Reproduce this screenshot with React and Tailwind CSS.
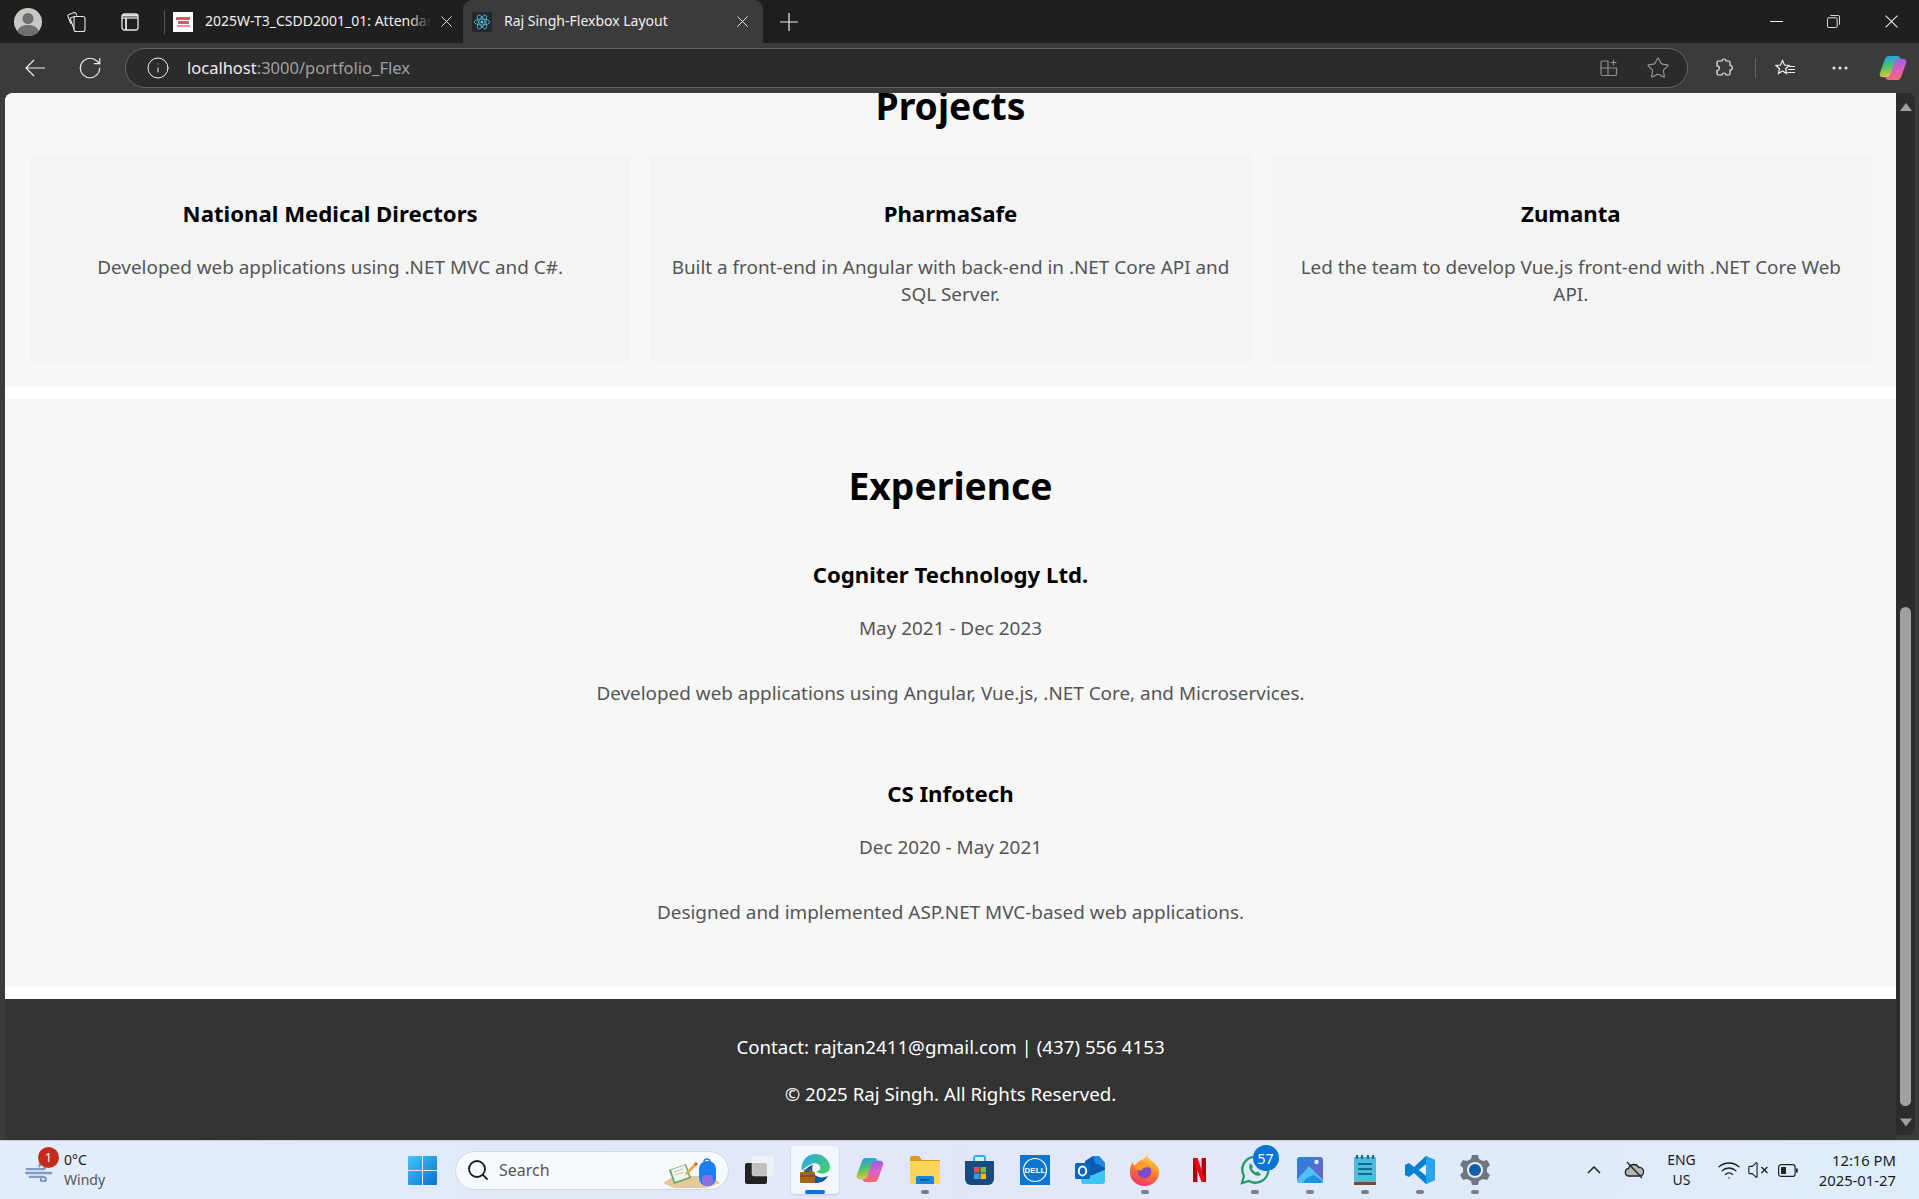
import { RotateCw, Info, Star, Wifi, VolumeX, Search } from "lucide-react";

const projects = [
  { title: "National Medical Directors", text: "Developed web applications using .NET MVC and C#." },
  { title: "PharmaSafe", text: "Built a front-end in Angular with back-end in .NET Core API and SQL Server." },
  { title: "Zumanta", text: "Led the team to develop Vue.js front-end with .NET Core Web API." },
];

const jobs = [
  { company: "Cogniter Technology Ltd.", dates: "May 2021 - Dec 2023", text: "Developed web applications using Angular, Vue.js, .NET Core, and Microservices." },
  { company: "CS Infotech", dates: "Dec 2020 - May 2021", text: "Designed and implemented ASP.NET MVC-based web applications." },
];

function Cross({ className }) {
  return (
    <svg viewBox="0 0 12 12" className={className} fill="none" stroke="currentColor" strokeWidth="1">
      <path d="M.5.5l11 11M11.5.5l-11 11" />
    </svg>
  );
}

function ReactLogo() {
  return (
    <svg viewBox="0 0 20 20" className="w-[18px] h-[18px]" fill="none" stroke="#58c4dc" strokeWidth="0.9">
      <ellipse cx="10" cy="10" rx="8.500" ry="3.400" />
      <ellipse cx="10" cy="10" rx="8.500" ry="3.400" transform="rotate(60 10 10)" />
      <ellipse cx="10" cy="10" rx="8.500" ry="3.400" transform="rotate(120 10 10)" />
      <circle cx="10" cy="10" r="1.700" fill="#58c4dc" stroke="none" />
    </svg>
  );
}

function CopilotLogo({ id, className }) {
  const ribbon = "M10 1h10c1.500 0 2.500 1 3 3-3 0-4.500 1.500-5.500 4L13.500 20c-1 2.500-2.500 4-5 4H4.500C1.500 24 0 22 1 19L6 5c1-2.500 2-4 4-4z";
  return (
    <svg viewBox="0 0 30 28" className={className}>
      <defs>
        <linearGradient id={`${id}a`} x1="0.3" y1="0" x2="0.5" y2="1">
          <stop offset="0" stopColor="#1a9ff2" />
          <stop offset="0.55" stopColor="#5cc65a" />
          <stop offset="1" stopColor="#f3c63a" />
        </linearGradient>
        <linearGradient id={`${id}b`} x1="0.3" y1="0" x2="0.5" y2="1">
          <stop offset="0" stopColor="#f0705a" />
          <stop offset="0.5" stopColor="#e05bc8" />
          <stop offset="1" stopColor="#8f62ea" />
        </linearGradient>
      </defs>
      <path d={ribbon} fill={`url(#${id}a)`} />
      <path d={ribbon} fill={`url(#${id}b)`} transform="rotate(180 15 14)" />
    </svg>
  );
}

function Tabs() {
  return (
    <div className="h-[43px] bg-[#1f1f1f] flex shrink-0">
      <div className="flex items-center pl-[14px]">
        <svg viewBox="0 0 28 28" className="w-[28px] h-[28px]">
          <circle cx="14" cy="14" r="14" fill="#c9c8c4" />
          <circle cx="14" cy="10.500" r="5.500" fill="#6f6f6f" />
          <path d="M3 24c2-5.500 6-7 11-7s9 1.500 11 7c-3 2.700-7 4-11 4s-8-1.300-11-4z" fill="#6f6f6f" />
        </svg>
        <svg viewBox="0 0 22 22" className="w-[22px] h-[22px] ml-[24px]" fill="none" stroke="#e6e6e6" strokeWidth="1.100">
          <rect x="8" y="5.500" width="11" height="15" rx="2" />
          <path d="M8 18 4.500 8.500c-.4-1 .1-1.800 1-2.100l3.500-1.200" />
          <path d="M5 13 2 5.500c-.4-1 .1-1.800 1-2.100l5-1.800c1-.3 1.800 .1 2.100 1l.6 1.900" />
        </svg>
        <svg viewBox="0 0 18 18" className="w-[18px] h-[18px] ml-[33px]" fill="none" stroke="#e6e6e6" strokeWidth="1.300">
          <rect x="1" y="1" width="16" height="16" rx="2.500" />
          <path d="M1 5h16" />
          <path d="M1 2.500h16M5 5v12" strokeWidth="1.800" />
        </svg>
        <div className="w-px h-[24px] bg-[#555] ml-[25px]" />
      </div>
      <div className="flex items-center w-[298px] pl-[8px] pr-[11px] text-[#f1f1f1] text-[14px]">
        <div className="w-[20px] h-[20px] bg-white shrink-0 flex flex-col items-center justify-center gap-[1px]">
          <div className="w-[14px] h-[3px] bg-[#e0566b]" />
          <div className="w-[11px] h-[3px] bg-[#e0566b]" />
          <div className="w-[13px] h-[2px] bg-[#eb8d9b]" />
        </div>
        <div className="relative ml-[12px] -mt-[2px] flex-1 overflow-hidden whitespace-nowrap">
          2025W-T3_CSDD2001_01: Attendance
          <div className="absolute right-0 top-0 bottom-0 w-[22px] bg-gradient-to-r from-transparent to-[#1f1f1f]" />
        </div>
        <Cross className="w-[11px] h-[11px] ml-[10px] shrink-0" />
      </div>
      <div className="flex items-center w-[300px] pl-[9px] pr-[15px] bg-[#3b3b3b] rounded-t-[9px] text-[#f1f1f1] text-[14px]">
        <div className="w-5 h-5 rounded-[3px] bg-[#23272f] flex items-center justify-center shrink-0">
          <ReactLogo />
        </div>
        <span className="ml-[12px] -mt-[2px] flex-1 whitespace-nowrap">Raj Singh-Flexbox Layout</span>
        <Cross className="w-[11px] h-[11px] shrink-0" />
      </div>
      <div className="flex items-center pl-[17px]">
        <svg viewBox="0 0 18 18" className="w-[18px] h-[18px]" fill="none" stroke="#eee" strokeWidth="1.200">
          <path d="M9 0v18M0 9h18" />
        </svg>
      </div>
      <div className="flex-1" />
      <div className="flex items-center text-[#eee]">
        <div className="w-[13px] h-px bg-[#eee]" />
        <svg viewBox="0 0 14 14" className="w-[13px] h-[13px] ml-[44px]" fill="none" stroke="#eee" strokeWidth="1">
          <rect x=".5" y="3" width="10.500" height="10.500" rx="1.500" />
          <path d="M3.500 .5H12A1.500 1.500 0 0 1 13.500 2v8.500" />
        </svg>
        <Cross className="w-[13px] h-[13px] ml-[45px] mr-[21px]" />
      </div>
    </div>
  );
}

function Toolbar() {
  return (
    <div className="h-[50px] bg-[#3b3b3b] flex items-center shrink-0 text-[#eee]">
      <svg viewBox="0 0 20 18" className="w-[20px] h-[18px] ml-[25px]" fill="none" stroke="#eee" strokeWidth="1.200">
        <path d="M20 9H1M9 1 1 9l8 8" />
      </svg>
      <RotateCw size={26} strokeWidth={1.100} className="ml-[32px]" />
      <div className="ml-[22px] w-[1563px] h-[40px] rounded-full border border-[#666] bg-[#2b2b2b] flex items-center pl-[20px] pr-[17px]">
        <Info size={24} strokeWidth={1} />
        <span className="ml-[17px] text-[16.500px]">
          localhost<span className="text-[#a0a0a0]">:3000/portfolio_Flex</span>
        </span>
        <div className="flex-1" />
        <svg viewBox="0 0 20 20" className="w-5 h-5" fill="none" stroke="#8e8e8e" strokeWidth="1.200">
          <path d="M9 3H3.500A1.500 1.500 0 0 0 2 4.500V10h7zM2 10v6a1.500 1.500 0 0 0 1.500 1.500H9V10zM9 17.500h7a1.500 1.500 0 0 0 1.500-1.500v-6H9z" />
          <path d="M14.500 1.500v6M11.500 4.500h6" />
        </svg>
        <Star size={24} strokeWidth={1.100} className="ml-[27px] text-[#9a9a9a]" />
      </div>
      <svg viewBox="0 0 20 20" className="w-5 h-5 ml-[26px]" fill="none" stroke="#eee" strokeWidth="1.200">
        <path d="M8 3a2 2 0 0 1 4 0h2.500A1.500 1.500 0 0 1 16 4.500V7.500a2.300 2.300 0 0 1 0 4.600v3.400a1.500 1.500 0 0 1-1.500 1.500H12a2 2 0 0 0-4 0H4.500A1.500 1.500 0 0 1 3 15.500V12.500a2.300 2.300 0 0 0 0-4.600V4.500A1.500 1.500 0 0 1 4.500 3z" />
      </svg>
      <div className="w-px h-[20px] bg-[#666] ml-[21px]" />
      <svg viewBox="0 0 20 18" className="w-[20px] h-[18px] ml-[19px]" fill="none" stroke="#eee" strokeWidth="1.200">
        <path d="M7.500 1.500l2 4.500 4.500.5-3.400 3.200 1 4.800-4.100-2.500-4 2.500 1-4.800L1 6.500 5.500 6z" />
        <path d="M14 7.500h6M13 10.500h7M12.500 13.500h7.500" />
      </svg>
      <svg viewBox="0 0 16 4" className="w-[16px] h-[4px] ml-[37px]" fill="#eee">
        <circle cx="2" cy="2" r="1.500" />
        <circle cx="8" cy="2" r="1.500" />
        <circle cx="14" cy="2" r="1.500" />
      </svg>
      <CopilotLogo id="cop" className="w-[28px] h-[26px] ml-[31px]" />
    </div>
  );
}

function Scrollbar() {
  return (
    <div className="w-[19px] mb-[5px] bg-[#2c2c2c] rounded-r-[8px] flex flex-col items-center shrink-0">
      <svg viewBox="0 0 12 8" className="w-[12px] h-[8px] mt-[10px]">
        <path d="M6 0l6 8H0z" fill="#a0a0a0" />
      </svg>
      <div className="w-[11px] h-[499px] mt-[496px] bg-[#a0a0a0] rounded-full" />
      <div className="flex-1" />
      <svg viewBox="0 0 12 8" className="w-[12px] h-[9px] mb-[8px]">
        <path d="M6 8l6-8H0z" fill="#a0a0a0" />
      </svg>
    </div>
  );
}

function Page() {
  return (
    <div className="flex-1 flex bg-[#3b3b3b] pl-[5px] pr-[4px] min-h-0">
      <div className="flex-1 flex flex-col min-w-0 bg-white rounded-tl-[8px] overflow-hidden">
        <section className="h-[294px] bg-[#f7f7f7] px-[25px] pb-[25px] flex flex-col justify-end">
          <h2 className="text-[37.300px] leading-[54px] font-bold text-black text-center mb-[22px]">Projects</h2>
          <div className="grid grid-cols-3 gap-[20px]">
            {projects.map((p) => (
              <div key={p.title} className="h-[207px] bg-[#f4f4f4] px-[15px] pt-[43px] text-center">
                <h3 className="text-[22.200px] leading-[32px] font-bold text-black">{p.title}</h3>
                <p className="mt-[24px] text-[18.900px] leading-[27px] text-[#555]">{p.text}</p>
              </div>
            ))}
          </div>
        </section>
        <section className="mt-[12px] h-[588px] bg-[#f7f7f7] text-center pt-[60px]">
          <h2 className="text-[37.300px] leading-[54px] font-bold text-black">Experience</h2>
          {jobs.map((j, i) => (
            <div key={j.company} className={i === 0 ? "mt-[46px]" : "mt-[71px]"}>
              <h3 className="text-[22.200px] leading-[32px] font-bold text-black">{j.company}</h3>
              <p className="mt-[24px] text-[18.900px] leading-[27px] text-[#555]">{j.dates}</p>
              <p className="mt-[38px] text-[18.900px] leading-[27px] text-[#555]">{j.text}</p>
            </div>
          ))}
        </section>
        <footer className="mt-[12px] flex-1 bg-[#333] text-white text-center pt-[34px] text-[18.700px] leading-[27px]">
          <p>Contact: rajtan2411@gmail.com | (437) 556 4153</p>
          <p className="mt-[20px]">© 2025 Raj Singh. All Rights Reserved.</p>
        </footer>
      </div>
      <Scrollbar />
    </div>
  );
}

function TaskIcon({ children, dot, active }) {
  return (
    <div className="w-[55px] h-[48px] flex justify-center">
      <div className={`relative w-[48px] h-[48px] flex items-center justify-center rounded-[4px] ${active ? "bg-white/60 shadow-sm" : ""}`}>
        {children}
        {dot && (
          <div className={`absolute bottom-0 left-1/2 -translate-x-1/2 h-[4px] rounded-full ${active ? "w-[20px] bg-[#0a74d6]" : "w-[8px] bg-[#7b7f87]"}`} />
        )}
      </div>
    </div>
  );
}

function SearchArt() {
  return (
    <svg viewBox="0 0 60 32" className="absolute right-[6px] top-[5px] w-[60px] h-[32px]">
      <path d="M1 26l11-7h38l8 7-13 5H12z" fill="#e6c99a" />
      <path d="M7 13l17-6 5 14-17 6z" fill="#5ea55f" />
      <path d="M9 13l14-5 4 12-14 5z" fill="#f4f6f2" />
      <path d="M12 15l9-3M13 18l9-3" stroke="#b9c4b8" strokeWidth="1" />
      <path d="M24 15l9-9 2 2-9 9-3 1z" fill="#f0a63a" />
      <path d="M32 7l2-2 2 2-2 2z" fill="#e2503a" />
      <path d="M42 5a3 3 0 0 1 6 0" fill="none" stroke="#1f7ff0" strokeWidth="1.500" />
      <rect x="37" y="4" width="17" height="25" rx="8" fill="#1f7ff0" />
      <rect x="40" y="18" width="11" height="10" rx="4" fill="#8d72e6" />
    </svg>
  );
}

function Taskbar() {
  return (
    <div className="h-[59px] shrink-0 bg-[linear-gradient(90deg,#e2edfb,#e1e7f8_50%,#dfedfb)] border-t border-[#c9cfd8] flex items-center text-[#1b1b1b]">
      <div className="flex items-center w-[408px] pl-[25px] relative">
        <svg viewBox="0 0 30 20" className="w-[29px] h-[20px] mt-[3px]" fill="none" stroke="#7f9bc0" strokeWidth="2.500" strokeLinecap="round">
          <path d="M2 7h16a3 3 0 1 0-3-3M1 11h26M5 15h14a2.500 2.500 0 1 1-2.500 2.500" />
        </svg>
        <div className="absolute left-[38px] top-[-3px] w-[21px] h-[21px] rounded-full bg-[#c42b1c] text-white text-[12px] flex items-center justify-center">1</div>
        <div className="ml-[10px] text-[14px] leading-[20px]">
          <div>0°C</div>
          <div className="text-[#555]">Windy</div>
        </div>
      </div>
      <svg viewBox="0 0 30 30" className="w-[29px] h-[29px]">
        <defs>
          <linearGradient id="win" x1="0" y1="0" x2="1" y2="1">
            <stop offset="0" stopColor="#45c5f5" />
            <stop offset="1" stopColor="#0b6fd0" />
          </linearGradient>
        </defs>
        <path d="M0 1a1 1 0 0 1 1-1h13.500v14.500H0zM15.500 0H29a1 1 0 0 1 1 1v13.500H15.500zM0 15.500h14.500V30H1a1 1 0 0 1-1-1zM15.500 15.500H30V29a1 1 0 0 1-1 1H15.500z" fill="url(#win)" />
      </svg>
      <div className="ml-[18px] w-[274px] h-[39px] rounded-full bg-[#f6f9fe] border border-[#cfd8ea] flex items-center pl-[10px] relative">
        <Search size={24} strokeWidth={1.800} />
        <span className="ml-[9px] text-[16px] text-[#555]">Search</span>
        <SearchArt />
      </div>
      <div className="flex items-center ml-[3px]">
        <TaskIcon>
          <svg viewBox="0 0 30 28" className="w-[30px] h-[28px]">
            <rect x="0" y="7" width="22" height="21" rx="2" fill="#222" />
            <rect x="7" y="0" width="22" height="20" rx="2" fill="#f5f5f5" fillOpacity="0.75" stroke="#e4e4e4" strokeWidth="0.500" />
          </svg>
        </TaskIcon>
        <TaskIcon active dot>
          <svg viewBox="0 0 30 32" className="w-[30px] h-[32px] -mt-[2px]">
            <defs>
              <linearGradient id="edge" x1="0" y1="0" x2="1" y2="0.800">
                <stop offset="0" stopColor="#2aa4ea" />
                <stop offset="1" stopColor="#45d06c" />
              </linearGradient>
            </defs>
            <path d="M15 1c8 0 15 6 15 13 0 4.500-3.500 6.500-8 6.500-3 0-5-1-5.500-2.500 3 0 4.500-2 3.500-4.500-1.500-3.500-6-4-9.500-2S5 14 2 18C0 10 6 1 15 1z" fill="url(#edge)" />
            <path d="M5 17c4-4 7-5 8-5-1.500 3-1 7 2 10 3.500 3 8 3 13 1-3 5-7 7-12 7-7 0-11-4-11-13z" fill="#0c59a4" />
            <rect x="0" y="19" width="15" height="11" rx="1" fill="#a5661c" />
            <rect x="0" y="22.500" width="15" height="1" fill="#6e420f" />
            <path d="M4.500 19v-2h6v2" fill="none" stroke="#a5661c" strokeWidth="1.200" />
          </svg>
        </TaskIcon>
        <TaskIcon>
          <CopilotLogo id="cop2" className="w-[28px] h-[26px]" />
        </TaskIcon>
        <TaskIcon dot>
          <svg viewBox="0 0 30 28" className="w-[30px] h-[28px]">
            <path d="M0 2a2 2 0 0 1 2-2h7l3 4h18v4H0z" fill="#d99a1c" />
            <path d="M0 5h30v21a2 2 0 0 1-2 2H2a2 2 0 0 1-2-2z" fill="#fdd45a" />
            <path d="M6 28v-6a2 2 0 0 1 2-2h14a2 2 0 0 1 2 2v6z" fill="#1a84d6" />
            <rect x="10" y="23" width="10" height="1.500" fill="#0c4f94" />
          </svg>
        </TaskIcon>
        <TaskIcon>
          <svg viewBox="0 0 29 30" className="w-[29px] h-[30px]">
            <path d="M9 6V3a2 2 0 0 1 2-2h7a2 2 0 0 1 2 2v3" fill="none" stroke="#2cb3ea" strokeWidth="2" />
            <path d="M0 6h29v18a6 6 0 0 1-6 6H6a6 6 0 0 1-6-6z" fill="#164a80" />
            <rect x="9" y="12" width="5.500" height="5.500" fill="#ea4e2a" />
            <rect x="15.500" y="12" width="5.500" height="5.500" fill="#7fba2a" />
            <rect x="9" y="18.500" width="5.500" height="5.500" fill="#2ba3ea" />
            <rect x="15.500" y="18.500" width="5.500" height="5.500" fill="#fdb813" />
          </svg>
        </TaskIcon>
        <TaskIcon>
          <svg viewBox="0 0 30 30" className="w-[30px] h-[30px]">
            <rect width="30" height="30" fill="#0b76d1" />
            <circle cx="15" cy="15" r="11.500" fill="none" stroke="#fff" strokeWidth="1.200" />
            <text x="15" y="18" textAnchor="middle" fontSize="8" fontWeight="700" fill="#fff" fontFamily="Liberation Sans">DELL</text>
          </svg>
        </TaskIcon>
        <TaskIcon>
          <svg viewBox="0 0 30 28" className="w-[30px] h-[28px]">
            <path d="M10 5l8-5h6l6 7v7l-14 6-6-6z" fill="#0b5ab4" />
            <path d="M18 0h6l6 7v5L20 7z" fill="#1e88dc" />
            <path d="M6 15l10 5 14-6v11a3 3 0 0 1-3 3H10a3 3 0 0 1-4-3z" fill="#3cc6f2" />
            <rect x="0" y="7" width="15" height="16" rx="1.500" fill="#0a64c4" />
            <ellipse cx="7.500" cy="15" rx="3.700" ry="4.500" fill="none" stroke="#fff" strokeWidth="2" />
          </svg>
        </TaskIcon>
        <TaskIcon dot>
          <svg viewBox="0 0 30 32" className="w-[29px] h-[31px]">
            <defs>
              <linearGradient id="fox" x1="0.700" y1="0" x2="0.300" y2="1">
                <stop offset="0" stopColor="#ffdc3e" />
                <stop offset="0.500" stopColor="#ff7a2b" />
                <stop offset="1" stopColor="#f0306a" />
              </linearGradient>
            </defs>
            <path d="M17 0c1 5 13 8 13 18a15 14 0 0 1-30 0c0-5 1-8 3-11l1 4c3-1 4-4 6-5s6-2 7-6z" fill="url(#fox)" />
            <circle cx="15" cy="17" r="7" fill="#7b4bc9" />
            <path d="M4 13c4-5 12-5 17 0-4-1-8 0-9 3-3 0-6-1-8-3z" fill="#ff9a2b" />
          </svg>
        </TaskIcon>
        <TaskIcon>
          <svg viewBox="0 0 13 24" className="w-[13px] h-[24px]">
            <path d="M0 0h4.500v24L0 24.600z" fill="#b1060f" />
            <path d="M8.500 0H13v24.600L8.500 24z" fill="#b1060f" />
            <path d="M0 0h4.500L13 24.600 8.500 24z" fill="#e50914" />
          </svg>
        </TaskIcon>
        <TaskIcon dot>
          <div className="relative">
            <svg viewBox="0 0 30 30" className="w-[30px] h-[30px]" fill="none" stroke="#25996a" strokeWidth="2.300">
              <path d="M2 28l2-7a13 13 0 1 1 5 5z" />
              <path d="M10 9c-2 3 0 7 3 9.500s6 3 8 1l-3-3-2 1c-2-1-3-2-4-4l1-2-2-3z" fill="#25996a" stroke="none" />
            </svg>
            <div className="absolute -right-[9px] -top-[10px] w-[26px] h-[26px] rounded-full bg-[#0a74d6] text-white text-[14px] flex items-center justify-center">57</div>
          </div>
        </TaskIcon>
        <TaskIcon dot>
          <svg viewBox="0 0 26 26" className="w-[26px] h-[26px]">
            <defs>
              <linearGradient id="photo" x1="0" y1="0" x2="1" y2="1">
                <stop offset="0" stopColor="#1f86dc" />
                <stop offset="1" stopColor="#7c5cc8" />
              </linearGradient>
            </defs>
            <rect width="26" height="26" rx="3" fill="url(#photo)" />
            <circle cx="19.500" cy="5" r="2.200" fill="#f2f2f6" />
            <path d="M0 23L12 9l14 14v0a3 3 0 0 1-3 3H3a3 3 0 0 1-3-3z" fill="#4cc4f2" />
            <path d="M6 26c3-6 7-7 11-8 3 2 6 4 9 7-1 1-2 1-3 1z" fill="#1c95e0" />
          </svg>
        </TaskIcon>
        <TaskIcon dot>
          <svg viewBox="0 0 22 30" className="w-[22px] h-[30px]">
            <rect y="2" width="22" height="25" rx="1" fill="#50bcd9" />
            <rect y="27" width="22" height="3" fill="#7b4a2a" />
            <path d="M4 9h14M4 14h14M4 19h14" stroke="#0e6f96" strokeWidth="2" />
            <path d="M3 0v4M8 0v4M14 0v4M19 0v4" stroke="#0e6f96" strokeWidth="2.200" />
          </svg>
        </TaskIcon>
        <TaskIcon dot>
          <svg viewBox="0 0 30 30" className="w-[30px] h-[30px]">
            <path d="M21 1l9 4v20l-9 4L9 18l-5 4-4-2V10l4-2 5 4z" fill="#0a7fd0" />
            <path d="M21 9.500l-7 5.500 7 5.500z" fill="#eaf2fb" />
            <path d="M21 1l9 4v20l-9 4z" fill="#25a8f0" />
            <path d="M21 9.500l-7 5.500 7 5.500z" fill="#e3ecf7" />
          </svg>
        </TaskIcon>
        <TaskIcon dot>
          <svg viewBox="0 0 30 30" className="w-[30px] h-[30px]">
            <path d="M12 0h6l1 4 4 2 4-1 3 5-3 3v4l3 3-3 5-4-1-4 2-1 4h-6l-1-4-4-2-4 1-3-5 3-3v-4l-3-3 3-5 4 1 4-2z" fill="#6f7780" />
            <circle cx="15" cy="15" r="8" fill="#e8edf5" />
            <circle cx="15" cy="15" r="6" fill="#0e5fb0" />
          </svg>
        </TaskIcon>
      </div>
      <div className="flex-1" />
      <div className="flex items-center mr-[23px]">
        <svg viewBox="0 0 14 8" className="w-[14px] h-[8px]" fill="none" stroke="#222" strokeWidth="1.500">
          <path d="M1 7l6-6 6 6" />
        </svg>
        <svg viewBox="0 0 20 18" className="w-[20px] h-[18px] ml-[23px]" fill="none" stroke="#222" strokeWidth="1.300">
          <path d="M4.500 15a3.800 3.800 0 0 1 0-7.500 5.500 5.500 0 0 1 10.200-1A4.300 4.300 0 0 1 16 15z" fill="#b4b4b4" />
          <path d="M3 1l15 16" />
        </svg>
        <div className="ml-[23px] text-[14px] leading-[20px] text-center">
          <div>ENG</div>
          <div>US</div>
        </div>
        <Wifi size={24} strokeWidth={1.300} className="ml-[21px]" />
        <VolumeX size={22} strokeWidth={1.200} className="ml-[6px]" />
        <svg viewBox="0 0 20 13" className="w-[20px] h-[13px] ml-[9px]" fill="none" stroke="#222" strokeWidth="1.200">
          <rect x=".6" y=".6" width="16.500" height="11.800" rx="2.500" />
          <rect x="3" y="3" width="5" height="7" fill="#222" stroke="none" />
          <path d="M18.800 4.500v4" strokeWidth="2" />
        </svg>
        <div className="ml-[21px] text-[14.800px] leading-[20px] text-right">
          <div>12:16 PM</div>
          <div>2025-01-27</div>
        </div>
      </div>
    </div>
  );
}

export default function App() {
  return (
    <div className="w-[1919px] h-[1199px] flex flex-col overflow-hidden font-['Noto_Sans',sans-serif]">
      <Tabs />
      <Toolbar />
      <Page />
      <Taskbar />
    </div>
  );
}
